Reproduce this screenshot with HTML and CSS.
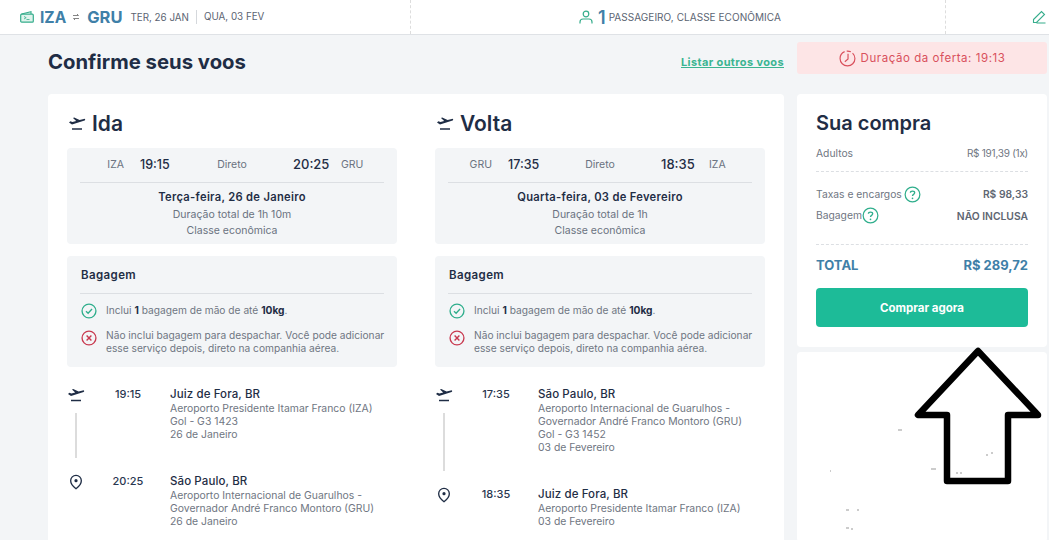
FILE: index.html
```html
<!DOCTYPE html>
<html lang="pt-BR">
<head>
<meta charset="utf-8">
<title>Confirme seus voos</title>
<link rel="stylesheet" href="styles.css">
</head>
<body>
<svg width="0" height="0" class="defs">
  <symbol id="plane" viewBox="0 0 18 15">
    <path d="M1 6.6 4 8.6 16.6 4.6C17.6 4.2 17.4 2.6 15.8 2.9L11.6 4 6.2 1.4 5 1.9 8.2 5 4.4 6 2.4 5.2Z" fill="#1f2d45"/>
    <path d="M4 13h10" stroke="#1f2d45" stroke-width="1.5" fill="none"/>
  </symbol>
  <symbol id="pin" viewBox="0 0 16 18">
    <path d="M8 16.5C4.5 13.8 2 11 2 7.5a6 6 0 0 1 12 0C14 11 11.500 13.800 8 16.500Z" fill="none" stroke="#1f2d45" stroke-width="1.500"/>
    <circle cx="8" cy="7.500" r="1.800" fill="#1f2d45"/>
  </symbol>
  <symbol id="ok" viewBox="0 0 18 18">
    <circle cx="9" cy="9" r="7.800" fill="none" stroke="#2fae8c" stroke-width="1.500"/>
    <path d="M5.600 9.200 8 11.500 12.400 6.800" fill="none" stroke="#2fae8c" stroke-width="1.500"/>
  </symbol>
  <symbol id="no" viewBox="0 0 18 18">
    <circle cx="9" cy="9" r="7.800" fill="none" stroke="#c8394f" stroke-width="1.500"/>
    <path d="M6.300 6.300 11.700 11.700M11.700 6.300 6.300 11.700" fill="none" stroke="#c8394f" stroke-width="1.600"/>
  </symbol>
  <symbol id="help" viewBox="0 0 18 18">
    <circle cx="9" cy="9" r="7.800" fill="none" stroke="#2fae8c" stroke-width="1.300"/>
    <path d="M6.800 7.200C6.800 4.800 11.300 4.800 11.300 7.200 11.300 8.900 9 8.800 9 10.600" fill="none" stroke="#2fae8c" stroke-width="1.400"/>
    <circle cx="9" cy="13" r="0.900" fill="#2fae8c"/>
  </symbol>
</svg>

<header class="topbar">
  <div class="top-route">
    <svg class="ico-wallet" viewBox="0 0 14 12"><rect x=".7" y="3.200" width="12.600" height="8" rx="1" fill="#dff3ec" stroke="#36ad8c" stroke-width="1.200"/><path d="M1.500 3 11 .8V3" fill="none" stroke="#36ad8c" stroke-width="1.100"/><path d="M4 5.500l2.200 1.200L4 8M6.500 8.500h3" fill="none" stroke="#36ad8c" stroke-width=".8"/></svg>
    <strong class="iata">IZA</strong>
    <svg class="ico-swap" viewBox="0 0 8 8"><path d="M1 2.500h5.500L5 1M7 5.500H1.500L3 7" fill="none" stroke="#777" stroke-width=".9"/></svg>
    <strong class="iata">GRU</strong>
    <span class="top-date">TER, 26 JAN</span>
    <span class="top-date top-date-last">QUA, 03 FEV</span>
  </div>
  <div class="top-pax">
    <svg class="ico-user" viewBox="0 0 14 14"><circle cx="7" cy="4" r="2.800" fill="none" stroke="#36ad8c" stroke-width="1.200"/><path d="M1 13.500V12c0-1.800 1.500-3 3-3h6c1.500 0 3 1.200 3 3v1.500" fill="none" stroke="#36ad8c" stroke-width="1.200"/></svg>
    <strong class="pax-num">1</strong>
    <span class="pax-text">PASSAGEIRO, CLASSE ECONÔMICA</span>
  </div>
  <div class="top-edit">
    <svg class="ico-pen" viewBox="0 0 14 14"><path d="M1.500 9.500 9.500 1.500 12.500 4.500 4.500 12.500H1.500ZM4.500 13H13.500" fill="none" stroke="#36ad8c" stroke-width="1.100"/></svg>
  </div>
</header>

<main class="page">
  <section class="content">
    <div class="title-row">
      <h1>Confirme seus voos</h1>
      <a class="other" href="#">Listar outros voos</a>
    </div>
    <div class="card legs">
      <article class="leg">
        <h2><svg class="ico-head"><use href="#plane"/></svg>Ida</h2>
        <div class="box summary">
          <div class="times"><span class="code code-l">IZA</span><b class="t1">19:15</b><span class="direct">Direto</span><b class="t2">20:25</b><span class="code">GRU</span></div>
          <div class="sum-info"><b>Terça-feira, 26 de Janeiro</b><span>Duração total de 1h 10m</span><span>Classe econômica</span></div>
        </div>
        <div class="box bag">
          <h3>Bagagem</h3>
          <p class="bag-row"><svg class="ico-bag"><use href="#ok"/></svg><span>Inclui <b>1</b> bagagem de mão de até <b>10kg</b>.</span></p>
          <p class="bag-row"><svg class="ico-bag"><use href="#no"/></svg><span>Não inclui bagagem para despachar. Você pode adicionar esse serviço depois, direto na companhia aérea.</span></p>
        </div>
        <div class="stop">
          <div class="rail"><svg class="ico-stop"><use href="#plane"/></svg><i class="line"></i></div>
          <div class="time">19:15</div>
          <div class="place"><b>Juiz de Fora, BR</b><span>Aeroporto Presidente Itamar Franco (IZA)</span><span>Gol - G3 1423</span><span>26 de Janeiro</span></div>
        </div>
        <div class="stop">
          <div class="rail"><svg class="ico-stop"><use href="#pin"/></svg></div>
          <div class="time">20:25</div>
          <div class="place"><b>São Paulo, BR</b><span>Aeroporto Internacional de Guarulhos -</span><span>Governador André Franco Montoro (GRU)</span><span>26 de Janeiro</span></div>
        </div>
      </article>
      <article class="leg">
        <h2><svg class="ico-head"><use href="#plane"/></svg>Volta</h2>
        <div class="box summary">
          <div class="times"><span class="code code-l">GRU</span><b class="t1">17:35</b><span class="direct">Direto</span><b class="t2">18:35</b><span class="code">IZA</span></div>
          <div class="sum-info"><b>Quarta-feira, 03 de Fevereiro</b><span>Duração total de 1h</span><span>Classe econômica</span></div>
        </div>
        <div class="box bag">
          <h3>Bagagem</h3>
          <p class="bag-row"><svg class="ico-bag"><use href="#ok"/></svg><span>Inclui <b>1</b> bagagem de mão de até <b>10kg</b>.</span></p>
          <p class="bag-row"><svg class="ico-bag"><use href="#no"/></svg><span>Não inclui bagagem para despachar. Você pode adicionar esse serviço depois, direto na companhia aérea.</span></p>
        </div>
        <div class="stop">
          <div class="rail"><svg class="ico-stop"><use href="#plane"/></svg><i class="line"></i></div>
          <div class="time">17:35</div>
          <div class="place"><b>São Paulo, BR</b><span>Aeroporto Internacional de Guarulhos -</span><span>Governador André Franco Montoro (GRU)</span><span>Gol - G3 1452</span><span>03 de Fevereiro</span></div>
        </div>
        <div class="stop">
          <div class="rail"><svg class="ico-stop"><use href="#pin"/></svg></div>
          <div class="time">18:35</div>
          <div class="place"><b>Juiz de Fora, BR</b><span>Aeroporto Presidente Itamar Franco (IZA)</span><span>03 de Fevereiro</span></div>
        </div>
      </article>
    </div>
  </section>

  <aside class="side">
    <div class="offer">
      <svg class="ico-clock" viewBox="0 0 16 16"><circle cx="8" cy="8" r="7" fill="none" stroke="#d9505c" stroke-width="1.100" stroke-dasharray="30 2 4 2"/><path d="M8.500 3.500V8.500L5.500 11" fill="none" stroke="#d9505c" stroke-width="1.100"/></svg>
      <span>Duração da oferta: 19:13</span>
    </div>
    <div class="card buy">
      <h2 class="buy-title">Sua compra</h2>
      <div class="row row-first"><span>Adultos</span><span class="amount">R$ 191,39 (1x)</span></div>
      <div class="row row-tax"><span class="with-help">Taxas e encargos <svg class="ico-help"><use href="#help"/></svg></span><b>R$ 98,33</b></div>
      <div class="row row-bag"><span class="with-help tight">Bagagem<svg class="ico-help"><use href="#help"/></svg></span><b>NÃO INCLUSA</b></div>
      <div class="row row-total"><b>TOTAL</b><b>R$ 289,72</b></div>
      <button class="cta" type="button">Comprar agora</button>
    </div>
    <div class="card blank"></div>
  </aside>
</main>

<svg class="arrow" viewBox="797 340 250 200" aria-hidden="true">
  <path class="arrow-shape" d="M978 351 918 415H947V481H1008V415H1038Z"/>
  <path class="specks" d="M898 430h4M931 469h5M956 473h2M960 473h2M986 455h2M991 453h2M830 471h1M846 510h3M857 510h2M846 528h3M851 529h2"/>
</svg>
</body>
</html>
```
FILE: styles.css
```css
* { box-sizing: border-box; }
html, body { margin: 0; height: 540px; overflow: hidden; }
body { background: #f3f5f7; font-family: Inter, "Open Sans", "Liberation Sans", sans-serif; color: #1f2d45; position: relative; }
.defs { position: absolute; }
b { font-weight: 600; }
h1, h2, h3, p { margin: 0; }

.topbar { display: flex; height: 35px; background: #fff; border-bottom: 1px solid #dfe2e6; }
.top-route { width: 411px; display: flex; align-items: center; padding-left: 20px; border-right: 1px dashed #ddd; }
.ico-wallet { width: 14px; height: 12px; margin-right: 6px; }
.iata { font-size: 15.500px; font-weight: 700; color: #3f80a8; }
.iata:nth-of-type(2) { font-size: 16.500px; }
.ico-swap { width: 8px; height: 8px; margin: 0 7px 0 6px; }
.top-date { font-size: 9.800px; color: #5b6472; margin-left: 8px; }
.top-date-last { margin-left: 7px; padding-left: 7px; border-left: 1px solid #d5d8dc; line-height: 14px; }
.top-pax { width: 535px; display: flex; align-items: center; padding-left: 168px; border-right: 1px dashed #ddd; }
.ico-user { width: 14px; height: 14px; margin-right: 5px; }
.pax-num { font-size: 18px; color: #3f80a8; font-weight: 600; margin-right: 3px; }
.pax-text { font-size: 10px; color: #5b6472; letter-spacing: .05px; }
.top-edit { flex: 1; display: flex; align-items: center; justify-content: flex-end; padding-right: 3px; }
.ico-pen { width: 14px; height: 14px; }

.page { display: flex; padding-left: 48px; gap: 13px; align-items: flex-start; }
.content { width: 736px; }
.title-row { display: flex; justify-content: space-between; align-items: center; height: 59px; }
h1 { font-size: 20.300px; font-weight: 700; position: relative; top: -3px; }
.other { font-size: 11px; font-weight: 700; color: #3ab491; text-decoration: underline; letter-spacing: .37px; position: relative; top: -3px; }

.card { background: #fff; border-radius: 4px; }
.legs { display: flex; gap: 38px; padding: 15px 19px 40px; height: 460px; }
.leg { width: 330px; }
.leg h2 { display: flex; align-items: center; font-size: 21px; font-weight: 600; height: 28px; margin-bottom: 11px; }
.ico-head { width: 18px; height: 15px; margin: 0 6px 0 1px; }
.box { background: #f3f5f7; border-radius: 4px; padding: 0 13px; }

.summary { height: 96px; margin-bottom: 12px; }
.times { display: grid; grid-template-columns: 44px 53px 110px 54px 1fr; align-items: center; height: 35px; padding-bottom: 2px; border-bottom: 1px solid #dcdfe3; font-size: 10.500px; color: #6a7280; }
.code-l { text-align: right; }
.t1 { font-size: 12.500px; font-weight: 500; color: #1f2d45; padding-left: 16px; }
.t2 { font-size: 13px; font-weight: 500; color: #1f2d45; padding-left: 6px; }
.direct { text-align: center; }
.sum-info { display: flex; flex-direction: column; align-items: center; padding-top: 6px; font-size: 10.500px; line-height: 16px; color: #6a7280; }
.sum-info b { color: #1f2d45; font-size: 11.200px; letter-spacing: .3px; font-weight: 600; margin-bottom: 1.500px; }

.bag { height: 111px; margin-bottom: 20px; }
.bag h3 { font-size: 11.500px; font-weight: 600; line-height: 38px; height: 38px; border-bottom: 1px solid #dcdfe3; margin-bottom: 8px; padding-left: 1px; letter-spacing: .4px; }
.bag-row { display: flex; gap: 8px; font-size: 10.200px; line-height: 13px; color: #6f7682; margin: 0 -6px 5px 1px; min-height: 16px; }
.bag-row span { padding-left: 1px; }
.bag-row:first-of-type { margin-bottom: 10px; align-items: center; }
.bag-row b { color: #1f2d45; font-weight: 700; }
.ico-bag { width: 16px; height: 16px; flex: none; margin-top: 1px; }

.stop { display: flex; padding-bottom: 33px; }
.rail { width: 18px; display: flex; flex-direction: column; align-items: center; position: relative; }
.ico-stop { width: 18px; height: 16px; flex: none; }
.line { width: 2px; flex: 1; background: #dcdcdc; margin: 10px 0 -17px; }
.time { width: 52px; margin: 0 16px 0 17px; text-align: center; font-size: 11px; font-weight: 500; line-height: 15px; color: #2a3750; }
.place { display: flex; flex-direction: column; font-size: 10.400px; line-height: 13px; color: #6f7682; white-space: nowrap; }
.place b { font-size: 11.500px; line-height: 15px; font-weight: 500; color: #1f2d45; letter-spacing: .1px; }

.side { width: 250px; display: flex; flex-direction: column; padding-top: 7px; }
.offer { height: 32px; background: #fde5e6; border-radius: 3px; display: flex; align-items: center; justify-content: center; gap: 5px; color: #d9505c; font-size: 11.500px; letter-spacing: .55px; margin-bottom: 20px; }
.ico-clock { width: 17px; height: 17px; }
.buy { height: 253px; padding: 15px 19px 0; }
.buy-title { font-size: 20px; font-weight: 600; line-height: 28px; margin-bottom: 9px; }
.row { display: flex; justify-content: space-between; align-items: center; font-size: 10.300px; color: #6f7682; }
.row b { color: #5e6672; font-weight: 600; }
.amount { font-size: 10px; letter-spacing: -.25px; }
.row-first { height: 13px; margin-bottom: 12px; }
.row-first + .row-tax { border-top: 1px dashed #dcdfe3; padding-top: 11px; height: 34px; }
.row-bag { height: 22px; }
.with-help { display: flex; align-items: center; gap: 2px; position: relative; }
.with-help.tight { top: -1px; gap: 0; }
.ico-help { width: 17px; height: 17px; }
.row-total { border-top: 1px dashed #dcdfe3; margin-top: 17px; height: 43px; font-size: 13px; padding-bottom: 2px; }
.row-total b { color: #3f80a8; font-weight: 700; }
.row-total + .cta { margin-top: 1px; }
.cta { display: block; width: 100%; height: 39px; border: 0; border-radius: 4px; background: #1dbb98; color: #fff; font: 700 11.500px Inter, "Open Sans", sans-serif; }
.blank { height: 190px; margin-top: 5px; }

.arrow { position: absolute; left: 797px; top: 340px; width: 250px; height: 200px; }
.arrow-shape { fill: #fff; stroke: #000; stroke-width: 6.500px; stroke-linejoin: round; }
.specks { fill: none; stroke: #999; stroke-width: 1px; }
```
